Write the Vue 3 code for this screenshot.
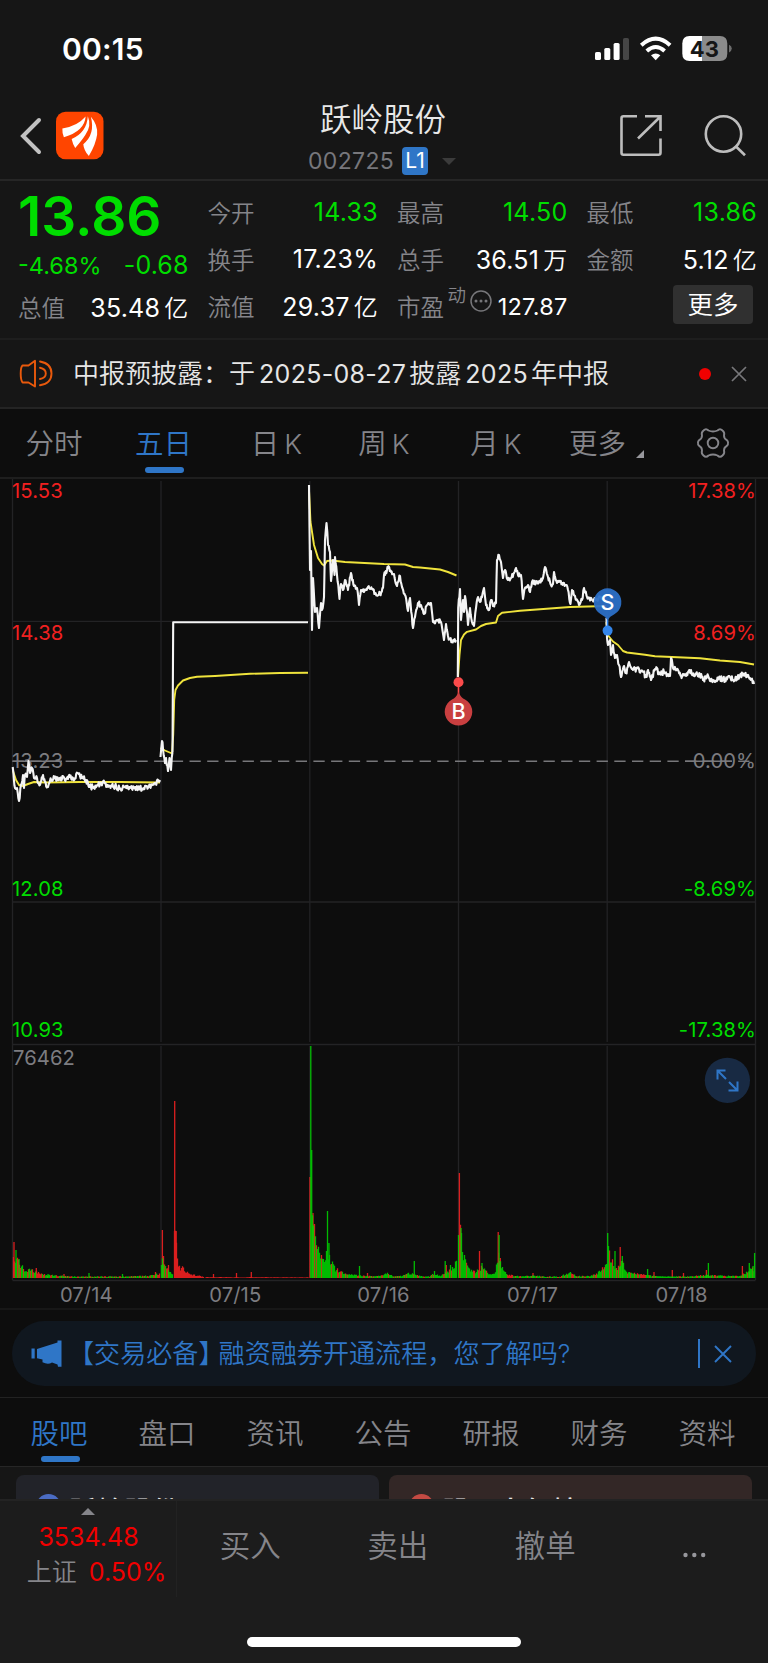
<script setup>
const quotes = [
  [
    { label: '今开', num: '14.33', down: true },
    { label: '换手', num: '17.23%' },
    { label: '流值', num: '29.37', unit: '亿' },
  ],
  [
    { label: '最高', num: '14.50', down: true },
    { label: '总手', num: '36.51', unit: '万' },
    { label: '市盈', num: '127.87', pe: true },
  ],
  [
    { label: '最低', num: '13.86', down: true },
    { label: '金额', num: '5.12', unit: '亿' },
    { more: true },
  ],
]

const periods = [
  { cjk: '分时', w: 108 },
  { cjk: '五日', w: 111, on: true },
  { cjk: '日', k: 'K', w: 115 },
  { cjk: '周', k: 'K', w: 100 },
  { cjk: '月', k: 'K', w: 124 },
  { cjk: '更多', w: 79 },
]
const sections = ['股吧', '盘口', '资讯', '公告', '研报', '财务', '资料']
const trades = ['买入', '卖出', '撤单']

// Small deterministic generator so the intraday texture is stable between renders
let seed = 20250718
const rand = () => {
  seed = (seed * 1664525 + 1013904223) % 4294967296
  return seed / 4294967296
}

const parse = (s) => s.trim().split(/\s+/).map((p) => p.split(',').map(Number))
const at = (pts, x) => {
  let i = 1
  while (i < pts.length - 1 && pts[i][0] < x) i++
  const [x0, y0] = pts[i - 1]
  const [x1, y1] = pts[i]
  return y0 + ((y1 - y0) * (x - x0)) / (x1 - x0 || 1)
}

const rough = (s, amp) => {
  const pts = parse(s)
  const out = [pts[0]]
  for (let i = 1; i < pts.length; i++) {
    const [x0, y0] = pts[i - 1]
    const [x1, y1] = pts[i]
    const n = Math.max(1, Math.round((x1 - x0) / 0.65))
    for (let j = 1; j < n; j++) {
      const t = j / n
      out.push([x0 + (x1 - x0) * t, y0 + (y1 - y0) * t + (rand() - 0.5) * 2 * amp])
    }
    out.push([x1, y1])
  }
  return out.map(([x, y]) => `${x.toFixed(1)},${y.toFixed(1)}`).join(' ')
}

const prices = [
  rough('12.7,767 15,788 17,788 19,801 21,785 23,775 24,788 25,775 27,777 28.5,761 30,773 32,768 34,778 37,778 40,785 43,775 45,782 48,787 50,781 55,778 60,780 63,776 66,779 70,777 75,778 78,773 82,778 86,780 89,787 94,787 100,784 105,783 108,787 115,786 120,789 125,787 130,788 135,787 140,789 145,786 150,786 155,783 160,780', 2.8),
  rough('160.5,757 162,741 163,749 165,763 166,758 168,771 169.5,758 171,770 172.5,752', 4),
  '172.5,752 173.2,622.3 308,622.3',
  rough('309,485 310,570 311,551 312,630 313,578 315,612 317,608 319,628 321,603 322,610 324,597 325,540 326.5,523 328,545 330,552 331,581 333,560 334.5,575 335,557 337,575 339.5,599 341,584 343,590 345,580 348,590 351,573 354,586 357,588 359,605 361,590 364,592 368,587 372,589 375,594 380,594 383,588 384,575 387,570 388,568 391,572 394,574 397,586 400,576 402,587 405,595 408,611 410,598 413,628 415,617 418,603 421,605 424,614 427,605 431,603 433,622 437,620 441,622 444,640 446,624 448,636 452,642 456,640', 2.6),
  rough('457.8,677 458.2,608 460,589 461,620 463,600 464,612 465,596 467,612 468,625 470,608 472,622 474,626 476,608 478,597 480,602 484,588 486,605 489,610 491,600 493,606 496,603 497,560 499,555 501,562 503,578 505,570 508,580 511,578 514,573 516,568 518,575 521,575 523,599 525,588 528,585 530,592 532,582 536,583 540,582 543,578 545,567 548,577 551,585 553,584 554,572 557,583 562,583 566,585 568,590 570.5,604 572,590 575,596 579,605 582,600 584,588 587,597 592,600 597,599 602,598 606,602', 2.2),
  rough('606.5,618 607,638 608,645 610,640 611,655 613,645 615,658 617,655 619,665 621,677 624,666 626,673 629,662 633,670 639,669 643,672 646,677 648,670 651,680 655,669 660,673 664,672 668,674 670,676 671,658 673,668 678,670 681,676 686,676 688,672 691,670 694,676 700,674 703,680 707,676 710,681 715,682 720,678 725,680 730,677 735,680 740,676 745,674 750,678 754,684', 2.9),
]

const averages = [
  '13,771 16,780 19,785 23,786 28,784 34,782 45,782.5 80,782 120,782 160,782.5',
  '160.5,748 165,750.5 172,753.5 173.2,735 174.2,700 175.5,690 178,685.5 183,680.5 190,678 197,676.8 215,676 250,673.8 280,673 308,672.7',
  '309,490 310.5,522 314,545 318,558 322,564 324,565.5 327,561 332,560.5 345,562 384,564 405,564.5 413,567 420,567.5 440,569.5 448,572 456.5,575.5',
  '458,677 459.5,655 461,640 464,634.5 467,631.8 476,629.5 481,626 486,624 496,622.5 498,616 502,612.8 520,610.8 550,608.5 570,607 606,606',
  '606.3,622 608.5,636 613,641.5 618,645 623,651 627,652.5 645,654.8 655,656.3 700,658.3 720,660.5 740,662 754,664.5',
]

// Volume: height envelope, then single tall bars, per trading day
const BASE = 1278
const bars = { red: '', green: '' }
const bar = (x, h, c) => {
  bars[c] += `M${x.toFixed(1)} ${BASE}V${(BASE - h).toFixed(1)}`
}
const volume = (s, upShare) => {
  const pts = parse(s)
  for (let x = pts[0][0]; x <= pts[pts.length - 1][0]; x += 1) {
    const h = at(pts, x) * (0.65 + rand() * 0.5)
    bar(x, h, rand() < upShare ? 'red' : 'green')
  }
}
volume('13.5,22 18,18 22,12 27,8 32,8 40,5 50,3 60,2.2 75,1.6 120,1.6 145,2 153,3 160,5', 0.42)
volume('161.5,19 165,19 168,9 173,5', 0.2)
volume('174.5,60 176.5,48 177.5,24 179,12 181,9 183,11 185,8 190,4 200,2 204,1', 1)
volume('206,.8 225,.8 240,.8 308,.7', 1)
volume('311.5,100 312.5,80 314,60 316,46 318,32 321,24 325,18 328,30 331,18 334,11 340,7 348,4 360,2.6 380,2 387,5 394,1.8 402,2 408,5 413,5 420,2 430,1.5 434,5 440,2 448,7 454,11 457,18', 0.33)
volume('458.5,48 461.5,50 463,27 466,16 470,10 476,7 482,12 485,10 488,4 495,4 498,26 501,14 504,6 510,3 520,2 533,2.4 545,1.5 560,1.5 571,6 576,2 590,2 597,5 604,12 607,18', 0.3)
volume('608.5,28 611,22 614,11 618,9 621,20 623,16 625,7 635,5 645,3 660,1.6 690,1.6 705,3 720,2.4 740,2 748,7 754,10', 0.36)
for (const [x, h, c] of [
  [14, 36, 'red'], [16, 28, 'green'], [19, 19, 'green'], [29, 9, 'green'], [36.3, 10, 'red'], [48, 4, 'green'],
  [64, 4, 'red'], [89, 5, 'green'], [122.5, 4, 'green'], [155.5, 6, 'red'],
  [162.4, 48, 'red'], [163.5, 22, 'red'], [168.5, 13, 'red'], [174.7, 177, 'red'], [176.2, 47, 'red'],
  [213.5, 4, 'red'], [236.5, 5, 'red'], [251.3, 6, 'red'], [310, 101, 'red'], [310.8, 232, 'green'],
  [311.7, 128, 'green'], [313, 65, 'red'], [327.5, 67, 'green'], [329, 35, 'green'], [359.5, 12, 'green'],
  [367.5, 5, 'red'], [414.3, 17, 'green'], [434.5, 7, 'green'], [445.2, 17, 'green'], [446.3, 13, 'red'],
  [450.5, 13, 'green'], [459.4, 105, 'red'], [461, 50, 'green'], [479.5, 27, 'red'], [482, 15, 'green'],
  [498.2, 46, 'red'], [499.1, 43, 'green'], [500.3, 20, 'red'], [533, 5, 'red'], [607.7, 45, 'green'],
  [615, 27, 'green'], [620.2, 31, 'red'], [622.3, 22, 'green'], [647.6, 9, 'green'], [654, 6, 'red'],
  [672.3, 8, 'red'], [683.5, 5, 'red'], [708.4, 15, 'green'], [706.4, 8, 'red'], [742.4, 12, 'red'],
  [749.3, 15, 'green'], [753, 12, 'green'], [754.6, 25, 'green'],
]) bar(x, h, c)

const labels = [
  { y: 497.8, l: '15.53', r: '17.38%', c: 'up' },
  { y: 639.8, l: '14.38', r: '8.69%', c: 'up' },
  { y: 767.5, l: '13.23', r: '0.00%', c: 'flat' },
  { y: 896.3, l: '12.08', r: '-8.69%', c: 'down' },
  { y: 1036.8, l: '10.93', r: '-17.38%', c: 'down' },
]
const dates = [
  { x: 86.3, t: '07/14' },
  { x: 235.3, t: '07/15' },
  { x: 383.5, t: '07/16' },
  { x: 532.5, t: '07/17' },
  { x: 681.5, t: '07/18' },
]
const dividers = [161, 309.8, 458.5, 607.2]
</script>

<template>
  <div class="screen">
    <div class="status">
      <span class="clock">00:15</span>
      <svg class="signal" width="136" height="28" viewBox="594 35 136 28">
        <g fill="#fff">
          <rect x="595" y="52" width="6" height="8" rx="1.6" />
          <rect x="604.3" y="48" width="6" height="12" rx="1.6" />
          <rect x="613.6" y="43" width="6" height="17" rx="1.6" />
        </g>
        <rect x="623" y="38" width="6" height="22" rx="1.6" fill="#464646" />
        <g fill="none" stroke="#fff" stroke-width="4">
          <path d="M641.3 45.2Q655.7 32.2 670.1 45.2" />
          <path d="M646.8 51Q655.7 43 664.6 51" />
        </g>
        <path d="M651 55.3Q655.7 51.6 660.4 55.3L655.7 60.3Z" fill="#fff" />
        <path d="M702 36V61H689.5Q682.3 61 682.3 53.5V43.5Q682.3 36 689.5 36Z" fill="#fff" />
        <path d="M702 36V61H720Q727.3 61 727.3 53.5V43.5Q727.3 36 720 36Z" fill="#8b8b8b" />
        <path d="M729 44.8Q731.8 46 731.8 48.5T729 52.6Z" fill="#6c6c6c" />
        <text x="704.3" y="56.6" text-anchor="middle" class="battery">43</text>
      </svg>
    </div>

    <header class="head">
      <svg class="back" width="24" height="40" viewBox="0 0 24 40">
        <path d="M20 4L4 20L20 36" fill="none" stroke="#c2c2c2" stroke-width="4" stroke-linecap="round" stroke-linejoin="miter" />
      </svg>
      <svg class="logo" width="48" height="48" viewBox="56 111.700 47.500 47.500">
        <rect x="56" y="111.500" width="47" height="47" rx="9.500" fill="#ff4500" />
        <g fill="#fff">
          <path d="M62.300 128Q77 126 85.300 116.200Q84.500 130.500 63.800 136.800Q62 132 62.300 128Z" />
          <path d="M87.500 116Q91.500 125.500 85 134.500Q81.500 140 75 147.300Q72.500 143.500 71.500 138.500Q86.500 132 87.500 116Z" />
          <path d="M90.500 116.500Q97.500 124.500 96.700 134Q95.500 143.500 88.500 155.300Q83.500 149.500 83 143.500Q95 134 90.500 116.500Z" />
        </g>
      </svg>
      <div class="title">
        <h1>跃岭股份</h1>
        <div class="code">
          <span>002725</span>
          <b>L1</b>
          <svg width="14" height="7" viewBox="0 0 14 7"><path d="M0 0H14L7 7Z" fill="#3b3b3b" /></svg>
        </div>
      </div>
      <svg class="share" width="44" height="44" viewBox="619 114 44 44" fill="none" stroke="#bdbdbd" stroke-width="2.600">
        <path d="M637 116.300H623.500Q621.500 116.300 621.500 118.300V152.700Q621.500 154.700 623.500 154.700H658.500Q660.500 154.700 660.500 152.700V138.500" />
        <path d="M645 116.300H660.500V131M660 117L638 138.500" />
      </svg>
      <svg class="search" width="44" height="44" viewBox="704 114 44 44" fill="none" stroke="#bdbdbd" stroke-width="2.600">
        <circle cx="723.500" cy="134" r="17.700" />
        <path d="M735.500 146L745 155.300" />
      </svg>
    </header>

    <section class="quote">
      <div class="main">
        <strong>13.86</strong>
        <div class="change"><span>-4.68%</span><span class="diff">-0.68</span></div>
        <div class="cell"><span class="label">总值</span><span class="num">35.48<i>亿</i></span></div>
      </div>
      <div v-for="(col, i) in quotes" :key="i" class="col">
        <template v-for="(q, j) in col" :key="j">
          <div v-if="q.more" class="cell end"><button class="more">更多</button></div>
          <div v-else class="cell">
            <span class="label">{{ q.label }}</span>
            <template v-if="q.pe">
              <small class="dyn">动</small>
              <svg class="dots" width="22" height="22" viewBox="0 0 22 22">
                <circle cx="11" cy="11" r="10" fill="none" stroke="#77777a" stroke-width="1.500" />
                <g fill="#77777a"><circle cx="6" cy="11" r="1.500" /><circle cx="11" cy="11" r="1.500" /><circle cx="16" cy="11" r="1.500" /></g>
              </svg>
            </template>
            <span class="num" :class="{ down: q.down, pe: q.pe }">{{ q.num }}<i v-if="q.unit">{{ q.unit }}</i></span>
          </div>
        </template>
      </div>
    </section>

    <section class="notice">
      <svg width="34" height="30" viewBox="19 359 34 30" fill="none" stroke="#e8590c" stroke-width="1.900" stroke-linejoin="round" stroke-linecap="round">
        <path d="M35 360.800V386.500L28.500 382.500H22.500Q20.700 380 20.700 373.500T22.500 365.500H28.500Z" />
        <path d="M40 367.800Q45.800 369 45.800 373.500T40 379" />
        <path d="M40 361.500Q51.500 363.500 51.500 373.500T40 385.300" />
      </svg>
      <p><span>中报预披露：于</span><em>2025-08-27</em><span>披露</span><em>2025</em><span>年中报</span></p>
      <span class="dot"></span>
      <svg class="close" width="16" height="16" viewBox="0 0 16 16"><path d="M1 1L15 15M15 1L1 15" stroke="#77777a" stroke-width="1.700" /></svg>
    </section>

    <nav class="periods">
      <div v-for="p in periods" :key="p.cjk" class="period" :class="{ on: p.on }" :style="{ width: p.w + 'px' }">
        <span>{{ p.cjk }}</span><em v-if="p.k">{{ p.k }}</em>
      </div>
      <svg class="corner" width="8" height="8" viewBox="0 0 8 8"><path d="M8 0V8H0Z" fill="#97979c" /></svg>
      <svg class="gear" width="34" height="34" viewBox="-17 -17 34 34" fill="none" stroke="#85858a" stroke-width="1.900" stroke-linejoin="round">
        <circle r="5.300" />
        <path d="M-4.500 -12.500Q0 -10.500 4.500 -12.500Q7 -15 9.500 -12.500Q12 -10.500 11 -7.500Q11 -4.500 13.500 -3.200Q15.500 -1.500 15 0Q15.500 1.500 13.500 3.200Q11 4.500 11 7.500Q12 10.500 9.500 12.500Q7 15 4.500 12.500Q0 10.500 -4.500 12.500Q-7 15 -9.500 12.500Q-12 10.500 -11 7.500Q-11 4.500 -13.500 3.200Q-15.500 1.500 -15 0Q-15.500 -1.500 -13.500 -3.200Q-11 -4.500 -11 -7.500Q-12 -10.500 -9.500 -12.500Q-7 -15 -4.500 -12.500Z" />
      </svg>
    </nav>

    <svg class="chart" width="768" height="829" viewBox="0 479 768 829">
      <g stroke="#232325" stroke-width="1.300" fill="none">
        <path d="M12.500 479V1280M755.500 479V1280" />
        <path d="M12.500 621.300H755.500M12.500 902H755.500M12.500 1044.500H755.500M12.500 1280.500H755.500" />
        <path v-for="x in dividers" :key="x" :d="`M${x} 481V1042M${x} 1046V1278`" />
      </g>
      <path d="M12.500 761.300H755.500" stroke="#77777a" stroke-width="1.600" stroke-dasharray="11.300 6.400" />
      <path d="M12.500 761.300H62M685 761.300H732" stroke="#77777a" stroke-width="1.400" />
      <g class="axis">
        <template v-for="t in labels" :key="t.l">
          <text x="12" :y="t.y" :class="t.c">{{ t.l }}</text>
          <text x="756" :y="t.y" :class="t.c" text-anchor="end">{{ t.r }}</text>
        </template>
        <text x="13" y="1065" class="flat vol">76462</text>
        <text v-for="d in dates" :key="d.t" :x="d.x" y="1302.300" class="flat" text-anchor="middle">{{ d.t }}</text>
      </g>
      <path :d="bars.red" stroke="#ff2222" stroke-width="1.300" stroke-opacity=".85" />
      <path :d="bars.green" stroke="#00d900" stroke-width="1.300" stroke-opacity=".85" />
      <g fill="none" stroke="#efe33c" stroke-width="1.900" stroke-linejoin="round">
        <polyline v-for="(p, i) in averages" :key="i" :points="p" />
      </g>
      <g fill="none" stroke="#f4f4f4" stroke-width="2.100" stroke-linejoin="round">
        <polyline v-for="(p, i) in prices" :key="i" :points="p" />
      </g>
      <g>
        <path d="M458.500 682V696" stroke="#fb4b4b" stroke-width="1.600" />
        <circle cx="458.500" cy="682.300" r="5" fill="#fb4b4b" />
        <path d="M458.500 692Q461 698 465 699.500A13.800 13.800 0 1 1 452 699.500Q456 698 458.500 692Z" fill="#c93f40" />
        <text x="458.600" y="718.500" text-anchor="middle" class="pin">B</text>
        <path d="M607.600 618V632" stroke="#3385ea" stroke-width="1.600" />
        <circle cx="607.600" cy="630.600" r="5" fill="#3385ea" />
        <path d="M607.600 620.500Q605 616 600.500 614A13.800 13.800 0 1 1 614.700 614Q610 616 607.600 620.500Z" fill="#2c70c7" fill-opacity=".95" />
        <text x="607.500" y="609.800" text-anchor="middle" class="pin">S</text>
      </g>
      <g>
        <circle cx="727.400" cy="1080.300" r="22.600" fill="#182a43" />
        <path d="M725.500 1070.500H717.500V1079.500M717.500 1070.500L726 1079M737.500 1081.500V1090.500H728.500M737.500 1090.500L729 1082" fill="none" stroke="#2f76c7" stroke-width="2" />
      </g>
    </svg>

    <section class="promo">
      <div class="pill">
        <svg width="32" height="28" viewBox="31 1340 32 28" fill="#2f76c7">
          <rect x="31.500" y="1348.500" width="3.200" height="10" />
          <path d="M37 1349L57.500 1342.500V1340.500H61.500V1366.800H58L57.500 1364.500L52 1362.500Q48 1365 42.500 1362.300V1359.500L37 1358.300Z" />
        </svg>
        <p><span class="open">【</span>交易必备<span class="shut">】</span>融资融券开通流程，您了解吗<em>?</em></p>
        <span class="rule"></span>
        <svg width="18" height="18" viewBox="0 0 18 18"><path d="M1 1L17 17M17 1L1 17" stroke="#2f76c7" stroke-width="1.900" /></svg>
      </div>
    </section>

    <nav class="sections">
      <div v-for="(s, i) in sections" :key="s" :class="{ on: i === 0 }">{{ s }}</div>
    </nav>

    <section class="cards">
      <div class="card cool"><span class="ball"></span><b>跃岭股份</b></div>
      <div class="card warm"><span class="ball"></span><b>股票人气榜</b></div>
    </section>

    <footer class="foot">
      <div class="index">
        <svg width="14" height="7" viewBox="0 0 14 7"><path d="M0 7H14L7 0Z" fill="#85858a" /></svg>
        <div class="point">3534.48</div>
        <div class="pct"><span>上证</span><em>0.50%</em></div>
      </div>
      <div v-for="t in trades" :key="t" class="trade">{{ t }}</div>
      <div class="trade dots3">
        <svg width="23" height="6" viewBox="0 0 23 6" fill="#97979c"><circle cx="2.500" cy="3" r="2.200" /><circle cx="11.300" cy="3" r="2.200" /><circle cx="20.200" cy="3" r="2.200" /></svg>
      </div>
      <span class="home"></span>
    </footer>
  </div>
</template>

<style>
html,
body {
  margin: 0;
  background: #161616;
}
</style>

<style scoped>
.screen {
  width: 768px;
  height: 1663px;
  overflow: hidden;
  display: flex;
  flex-direction: column;
  background: #161616;
  color: #e6e6e6;
  font-family: Inter, "Noto Sans CJK SC", sans-serif;
  font-weight: 400;
  white-space: nowrap;
}
.screen * {
  box-sizing: border-box;
}
svg {
  display: block;
  flex: none;
  overflow: visible;
}
em,
i {
  font-style: normal;
}
p,
h1 {
  margin: 0;
}

.status {
  height: 98px;
  flex: none;
  display: flex;
  justify-content: space-between;
  padding: 35px 38px 0 62px;
}
.clock {
  font-size: 30px;
  line-height: 28px;
  font-weight: 600;
  letter-spacing: 0.2px;
  color: #fff;
}
.battery {
  font-size: 22px;
  font-weight: 700;
  fill: #161616;
}

.head {
  height: 83px;
  flex: none;
  display: flex;
  border-bottom: 2px solid #262626;
  padding-left: 19px;
}
.back {
  margin-top: 18px;
}
.logo {
  margin: 14px 0 0 13px;
}
.title {
  margin-left: 204px;
  width: 160px;
}
.title h1 {
  margin: 1px 0 -1px 12px;
  font-size: 31.500px;
  line-height: 42px;
  font-weight: 350;
  color: #e8e8e8;
}
.code {
  display: flex;
  align-items: center;
  height: 28px;
  margin-top: 7px;
  font-size: 23px;
  color: #77777c;
}
.code span {
  width: 94px;
  letter-spacing: 0.35px;
}
.code b {
  width: 26px;
  height: 28px;
  margin-right: 14px;
  border-radius: 4px;
  background: #2f76c7;
  color: #fff;
  font: 400 21px/28px Inter, sans-serif;
  text-align: center;
}
.share {
  margin: 16px 0 0 151px;
}
.search {
  margin: 16px 0 0 41px;
}

.quote {
  height: 159px;
  flex: none;
  display: flex;
  gap: 19px;
  padding: 7px 0 0 18px;
  border-bottom: 2px solid #1e1e1e;
}
.main,
.col {
  width: 170.500px;
}
.main strong {
  display: block;
  height: 54px;
  font-size: 55px;
  line-height: 56px;
  font-weight: 600;
  color: #00dd00;
}
.change {
  height: 41px;
  padding-top: 5px;
  display: flex;
  justify-content: space-between;
  align-items: center;
  font-size: 23.500px;
  color: #00dd00;
}
.change .diff {
  font-size: 25px;
  letter-spacing: 0.1px;
}
.cell {
  height: 47.300px;
  display: flex;
  align-items: center;
  justify-content: space-between;
}
.label {
  font-size: 23.500px;
  font-weight: 350;
  color: #85858a;
}
.num {
  padding-top: 1px;
  font-size: 25px;
  letter-spacing: 0.25px;
  color: #fff;
}
.num:has(i) {
  padding-top: 0;
  margin-top: -1px;
}
.num.down {
  color: #00dd00;
}
.num.pe {
  font-size: 23.500px;
}
.num i {
  font-size: 24px;
  font-weight: 350;
  margin-left: 4px;
}
.dyn {
  font-size: 18.500px;
  font-weight: 350;
  color: #85858a;
  margin: -24px 0 0 -2px;
}
.dots {
  margin: -10px 0 0 -1px;
}
.end {
  justify-content: flex-end;
}
.more {
  width: 80px;
  height: 39px;
  margin: -3px 4px 0 0;
  padding: 0;
  border: 0;
  border-radius: 4px;
  background: #303030;
  color: #fff;
  font: 350 25.500px/36px Inter, "Noto Sans CJK SC", sans-serif;
}

.notice {
  height: 69px;
  flex: none;
  display: flex;
  align-items: center;
  padding-left: 19px;
  border-bottom: 2px solid #242424;
}
.notice p {
  width: 577px;
  margin: -4px 0 0 20px;
  font-size: 26px;
  font-weight: 350;
  display: flex;
  align-items: baseline;
}
.notice em {
  font-size: 25px;
  font-weight: 400;
  letter-spacing: 0.3px;
  margin: 0 3px 0 4px;
}
.dot {
  width: 12px;
  height: 12px;
  margin-left: 49px;
  border-radius: 50%;
  background: #f00000;
}
.close {
  margin-left: 20px;
}

.periods {
  height: 70px;
  flex: none;
  display: flex;
  background: #0d0d0d;
  border-bottom: 2px solid #1e1e1e;
}
.period {
  position: relative;
  height: 68px;
  display: flex;
  align-items: baseline;
  justify-content: center;
  font-size: 28.500px;
  line-height: 69px;
  font-weight: 350;
  color: #85858a;
}
.period em {
  margin-left: 5px;
  font-size: 27.500px;
}
.on {
  color: #2f76c7;
}
.on::after {
  content: "";
  position: absolute;
  left: calc(50% - 18.500px);
  bottom: 4px;
  width: 39px;
  height: 6px;
  border-radius: 3px;
  background: #2f76c7;
}
.corner {
  margin: 41px 0 0 -1px;
}
.gear {
  margin: 17px 0 0 52px;
}

.chart {
  background: #0d0d0d;
}
.axis {
  font-size: 20.200px;
}
.axis .vol,
.axis text {
  letter-spacing: 0.1px;
}
.up {
  fill: #f12020;
}
.axis .down {
  fill: #00dd00;
}
.flat {
  fill: #7c7c80;
}
.pin {
  font-size: 21.500px;
  font-weight: 500;
  fill: #fff;
}

.promo {
  height: 90px;
  flex: none;
  padding: 11px 12px 0;
  background: #0d0d0d;
  border-top: 2px solid #171717;
  border-bottom: 1px solid #222;
}
.pill {
  height: 65px;
  display: flex;
  align-items: center;
  padding-left: 19px;
  border-radius: 33px;
  background: #10171f;
  color: #2f76c7;
}
.pill p {
  width: 631px;
  margin: -4px 0 0 5px;
  font-size: 26.100px;
  font-weight: 350;
}
.shut {
  letter-spacing: -13px;
  margin-right: 7px;
}
.pill em {
  font-size: 25px;
}
.rule {
  width: 1.500px;
  height: 29px;
  margin: 0 14px 0 -1px;
  background: #2f76c7;
}

.sections {
  height: 69px;
  flex: none;
  display: flex;
  padding-left: 5px;
  background: #0d0d0d;
  border-bottom: 1px solid #262626;
}
.sections div {
  position: relative;
  width: 108px;
  line-height: 71px;
  font-size: 28.500px;
  font-weight: 350;
  text-align: center;
  color: #85858a;
}
.sections .on {
  color: #2f76c7;
}

.cards {
  height: 32px;
  flex: none;
  display: flex;
  gap: 10px;
  padding: 8px 16px 0;
  overflow: hidden;
}
.card {
  flex: 1;
  height: 80px;
  display: flex;
  border-radius: 8px;
  padding: 19px 0 0 20px;
}
.cool {
  background: #222329;
}
.warm {
  background: #332726;
}
.ball {
  width: 25px;
  height: 25px;
  border-radius: 50%;
  background: #4b6cc4;
}
.warm .ball {
  background: #c44a43;
}
.card b {
  margin: 2px 0 0 8px;
  font-size: 27.500px;
  line-height: 30px;
  font-weight: 500;
}

.foot {
  position: relative;
  height: 165px;
  flex: none;
  display: flex;
  background: #1c1c1c;
  border-top: 2px solid #232323;
}
.index {
  width: 177px;
  height: 96px;
  border-right: 1px solid #222;
  display: flex;
  flex-direction: column;
  align-items: center;
  padding-top: 7px;
}
.point {
  margin: 5px 0 0 1px;
  font-size: 25px;
  line-height: 34px;
  color: #f00000;
}
.pct {
  display: flex;
  align-items: center;
  gap: 12px;
  margin-left: 17px;
  line-height: 34px;
  font-size: 25px;
  font-weight: 350;
  color: #85858a;
}
.pct em {
  margin-top: 1px;
  color: #f00000;
  font-weight: 400;
}
.trade {
  width: 147.500px;
  line-height: 90px;
  text-indent: -1px;
  text-align: center;
  font-size: 30.500px;
  font-weight: 350;
  color: #85858a;
}
.dots3 {
  display: flex;
  justify-content: center;
  padding: 51px 0 0 2px;
}
.home {
  position: absolute;
  left: 247px;
  bottom: 17px;
  width: 274px;
  height: 10px;
  border-radius: 5px;
  background: #fff;
}
</style>
